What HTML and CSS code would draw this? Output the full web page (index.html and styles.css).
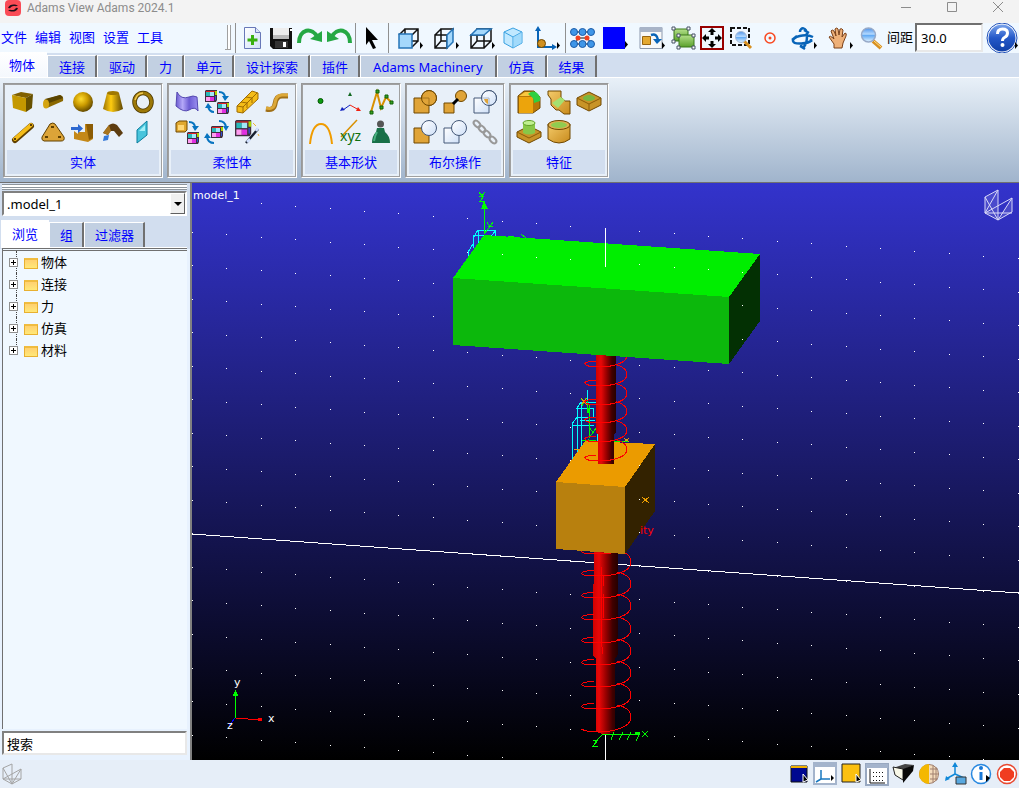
FILE: index.html
```html
<!DOCTYPE html>
<html lang="zh-CN">
<head>
<meta charset="utf-8">
<title>Adams View Adams 2024.1</title>
<link rel="stylesheet" href="styles.css">
</head>
<body>
<header class="titlebar">
  <svg class="logo" viewBox="0 0 16 16" width="16" height="16" aria-hidden="true">
    <defs>
      <linearGradient id="gold" x1="0" y1="0" x2="1" y2="0"><stop offset="0" stop-color="#9a7200"/><stop offset=".4" stop-color="#ffcc10"/><stop offset="1" stop-color="#5e4500"/></linearGradient>
      <radialGradient id="ball" cx=".4" cy=".35" r=".65"><stop offset="0" stop-color="#ffdc30"/><stop offset=".5" stop-color="#cc9c00"/><stop offset="1" stop-color="#664c00"/></radialGradient>
      <linearGradient id="tan" x1="0" y1="0" x2="1" y2="1"><stop offset="0" stop-color="#f4cb6a"/><stop offset="1" stop-color="#c88a1c"/></linearGradient>
      <linearGradient id="paper" x1="0" y1="0" x2="1" y2="1"><stop offset="0" stop-color="#fff"/><stop offset="1" stop-color="#cfe0f8"/></linearGradient>
      <linearGradient id="leaf" x1="0" y1="0" x2="0" y2="1"><stop offset="0" stop-color="#b4e08a"/><stop offset="1" stop-color="#5aa02c"/></linearGradient>
      <linearGradient id="lens" x1="0" y1="0" x2="0" y2="1"><stop offset="0" stop-color="#4a90e8"/><stop offset=".45" stop-color="#b8dcff"/><stop offset=".5" stop-color="#5aa6f4"/><stop offset="1" stop-color="#e4f4ff"/></linearGradient>
      <linearGradient id="help" x1="0" y1="0" x2="0" y2="1"><stop offset="0" stop-color="#7aa4ec"/><stop offset=".5" stop-color="#2458c8"/><stop offset="1" stop-color="#1040a8"/></linearGradient>
      <linearGradient id="violet" x1="0" y1="0" x2="1" y2="0"><stop offset="0" stop-color="#6a5ad0"/><stop offset=".3" stop-color="#b4a8f8"/><stop offset=".6" stop-color="#6c5cd4"/><stop offset="1" stop-color="#9c90f0"/></linearGradient>
    </defs>
    <rect width="16" height="16" rx="4" fill="#fa4b55"/>
    <path d="M3 8c1-3 4-4 7-3.500l3 1-2 .8c-3-1-5 0-6 2zM13 8c-1 3-4 4-7 3.500l-3-1 2-.8c3 1 5 0 6-2z" fill="#1c1018"/>
  </svg>
  <h1 class="title">Adams View Adams 2024.1</h1>
  <div class="window-buttons">
    <button aria-label="最小化"><svg viewBox="0 0 12 12" width="12" height="12"><path d="M1 6.500h10" class="thin"/></svg></button>
    <button aria-label="最大化"><svg viewBox="0 0 12 12" width="12" height="12"><path d="M1.500 1.500h9v9h-9z" class="thin"/></svg></button>
    <button aria-label="关闭"><svg viewBox="0 0 12 12" width="12" height="12"><path d="M1 1l10 10M11 1L1 11" class="thin"/></svg></button>
  </div>
</header>

<div class="toolbar">
  <nav class="menu">
    <a href="#file">文件</a><a href="#edit">编辑</a><a href="#view">视图</a><a href="#settings">设置</a><a href="#tools">工具</a>
  </nav>
  <div class="grip"></div>
  <div class="tool-group">
    <button class="tool" aria-label="新建"><svg viewBox="0 0 29 30"><path d="M6.500 4.500h11l5 5v16h-16z" fill="url(#paper)" stroke="#6878b8"/><path d="M17.500 4.500v5h5" fill="#dde4f8" stroke="#6878b8"/><path d="M13 12h3v3.500h3.500v3H16V22h-3v-3.500H9.500v-3H13z" fill="#38b010"/></svg></button>
    <button class="tool" aria-label="保存"><svg viewBox="0 0 29 30"><path d="M3 5h22v21H6l-3-3z" fill="#111"/><path d="M6 5h16v11H6z" fill="#eee"/><path d="M6 12h16v4H6z" fill="#bbb"/><path d="M8 18h13v7H8z" fill="#333"/><path d="M16 19h3v5h-3z" fill="#fff"/><path d="M23 6h2v2h-2z" fill="#fff"/></svg></button>
    <button class="tool" aria-label="重做"><svg viewBox="0 0 29 30"><path d="M3 20C3 6 16 3 22 15" fill="none" stroke="#25a844" stroke-width="4"/><path d="M14 16l12 3V8z" fill="#25a844"/></svg></button>
    <button class="tool" aria-label="撤销"><svg viewBox="0 0 29 30"><path d="M25 20C25 6 12 3 6 15" fill="none" stroke="#25a844" stroke-width="4"/><path d="M14 16L2 19V8z" fill="#25a844"/></svg></button>
  </div>
  <div class="tool-group">
    <button class="tool" aria-label="选择"><svg viewBox="0 0 29 30"><path d="M8 4l12 13h-6l4 8-3 1-4-8-3 4z" fill="#000"/></svg></button>
  </div>
  <div class="tool-group">
    <button class="tool wide" aria-label="前视图"><svg viewBox="0 0 36 30"><path d="M14 18V6h13v12zM14 6l-6 6M27 6l-6 6M27 18l-6 6" fill="none" stroke="#111" stroke-width="1.500"/><path d="M8 11h13v14H8z" fill="#a4d8fc" stroke="#2474b8" stroke-width="1.500"/><path class="drop" d="M29 19v7l3-3.500z"/></svg></button>
    <button class="tool wide" aria-label="右视图"><svg viewBox="0 0 36 30"><path d="M8 12h12v13H8zM14 18V6h13M14 18h12M14 6l-6 6M14 18l-6 7" fill="none" stroke="#111" stroke-width="1.500"/><path d="M20 12l6-6v13l-6 6z" fill="#a4d8fc" stroke="#2474b8" stroke-width="1.500"/><path class="drop" d="M29 19v7l3-3.500z"/></svg></button>
    <button class="tool wide" aria-label="顶视图"><svg viewBox="0 0 36 30"><path d="M8 12h13v13H8zM14 18V6h14v12zM14 18l-6 7M28 18l-7 7" fill="none" stroke="#111" stroke-width="1.500"/><path d="M14 6h14l-7 6H8z" fill="#a4d8fc" stroke="#2474b8" stroke-width="1.500"/><path class="drop" d="M29 19v7l3-3.500z"/></svg></button>
    <button class="tool" aria-label="等轴测视图"><svg viewBox="0 0 29 30"><path d="M14 5l9 4v11l-9 5-9-5V9z" fill="#c0e8ff" stroke="#38a0e0"/><path d="M5 9l9 5 9-5M14 14v11" fill="none" stroke="#38a0e0"/><path d="M14 14l9-5v11l-9 5z" fill="#8cd0f8" opacity=".6"/></svg></button>
    <button class="tool wide" aria-label="坐标系方向"><svg viewBox="0 0 36 30"><path d="M10 7v17h17" fill="none" stroke="#0864b8" stroke-width="2"/><path d="M7 8l3-5 3 5zM24 21l5 3-5 3z" fill="#0864b8"/><circle cx="13.500" cy="20.500" r="4" fill="#d09020" stroke="#704800"/><path class="drop" d="M29 19v7l3-3.500z"/></svg></button>
  </div>
  <div class="tool-group">
    <button class="tool" aria-label="显示拓扑"><svg viewBox="0 0 29 30"><path d="M6 9h18M6 21h18M6 21l5-6M24 21l-5-6" stroke="#111"/><path d="M8 15h13" stroke="#111"/><circle cx="10" cy="15" r="2.500" fill="#f04020"/><circle cx="19" cy="15" r="2.500" fill="#f04020"/><g fill="#3f96e8" stroke="#1c5ca8"><circle cx="6" cy="9" r="3.500"/><circle cx="14.500" cy="9" r="3.500"/><circle cx="23" cy="9" r="3.500"/><circle cx="6" cy="21" r="3.500"/><circle cx="14.500" cy="21" r="3.500"/><circle cx="23" cy="21" r="3.500"/></g></svg></button>
    <button class="tool wide" aria-label="颜色"><svg viewBox="0 0 36 30"><path d="M6 4h22v22H6z" fill="#00f"/><path class="drop" d="M28 18v7l3-3.500z"/></svg></button>
    <button class="tool wide" aria-label="对象位置"><svg viewBox="0 0 36 30"><path d="M7 4.500h22v21H7z" fill="#f8f8f8" stroke="#8c98ac"/><path d="M7 4h22v5H7z" fill="#a8b4c8"/><path d="M9.500 13.500h8v8h-8z" fill="#e4a830" stroke="#986410"/><path d="M18 12q6-2 7 5" fill="none" stroke="#0864b8" stroke-width="2.500"/><path d="M20 16h9l-5 5z" fill="#0864b8"/><path class="drop" d="M29 19v7l3-3.500z"/></svg></button>
    <button class="tool" aria-label="编组"><svg viewBox="0 0 29 30"><path d="M5 6h14v12H5z" fill="url(#leaf)" stroke="#387818"/><path d="M10 12h15v12H10z" fill="url(#leaf)" stroke="#387818"/><path d="M3 4h3v3H3zM18 4h3v3h-3zM3 17h3v3H3zM8 11h3v3H8zM23 11h3v3h-3zM8 23h3v3H8zM23 23h3v3h-3z" fill="#fff" stroke="#445064"/></svg></button>
    <button class="tool" aria-label="适合窗口"><svg viewBox="0 0 29 30"><path d="M3 4h22v22H3z" fill="#f0f8ff" stroke="#980000" stroke-width="2"/><path d="M14 5l4 4h-2.500v3h-3V9H10zM14 25l4-4h-2.500v-3h-3v3H10zM4 15l4-4v2.500h3v3H8V19zM24 15l-4-4v2.500h-3v3h3V19z"/></svg></button>
    <button class="tool" aria-label="窗口缩放"><svg viewBox="0 0 29 30"><path d="M4 5h18v17H4z" fill="none" stroke="#111" stroke-width="2" stroke-dasharray="4 2"/><path d="M17 18l7 7" stroke="#d89020" stroke-width="3"/><circle cx="14" cy="14" r="5.500" fill="url(#lens)" stroke="#a4b8d4"/></svg></button>
    <button class="tool" aria-label="居中"><svg viewBox="0 0 29 30"><circle cx="14" cy="15" r="5" fill="none" stroke="#f84820" stroke-width="1.500"/><circle cx="14" cy="15" r="1.500" fill="#f84820"/></svg></button>
    <button class="tool wide" aria-label="旋转"><svg viewBox="0 0 36 30"><path d="M28 14C20 10 7 14 8 18s15 3 19-1M15 9c0-5 7-6 7 4 0 10-5 14-6 9M7 17l5-4M15 23l5 3M19 7l5 3M26 16v3" fill="none" stroke="#0864b8" stroke-width="2.500"/><path class="drop" d="M29 19v7l3-3.500z"/></svg></button>
    <button class="tool wide" aria-label="平移"><svg viewBox="0 0 36 30"><path d="M13 25v-4l-5-7q1-2 4 1l1 1-3-8q1-2 3 0l2 5-1-7q2-2 3 0l1 6 1-6q2-1 3 1l-1 7 3-4q2 0 1 3l-3 7-1 5z" fill="#eeb078" stroke="#7a4018"/><path class="drop" d="M29 19v7l3-3.500z"/></svg></button>
    <button class="tool" aria-label="缩放"><svg viewBox="0 0 29 30"><path d="M16 18l8 7" stroke="#d89020" stroke-width="4"/><path d="M17 18l7 6" stroke="#ffe08c"/><circle cx="11.500" cy="12" r="7" fill="url(#lens)" stroke="#98aac8" stroke-width="1.500"/></svg></button>
  </div>
  <label class="spacing" for="spacing">间距</label>
  <input class="spacing-input" id="spacing" value="30.0">
  <button class="help" aria-label="帮助"><svg viewBox="0 0 34 30"><circle cx="17" cy="15" r="15" fill="#fff" stroke="#2050b8"/><circle cx="17" cy="15" r="13.500" fill="url(#help)"/><path d="M12.500 11q0-5 5-5 5 0 5 4 0 3-3 4.500-2 1-2 3.500" fill="none" stroke="#fff" stroke-width="3"/><circle cx="17.500" cy="22" r="2" fill="#fff"/><path class="drop" d="M30 19v7l3-3.500z"/></svg></button>
</div>

<nav class="tabs">
  <button class="tab active">物体</button><button class="tab">连接</button><button class="tab">驱动</button><button class="tab">力</button><button class="tab">单元</button><button class="tab">设计探索</button><button class="tab">插件</button><button class="tab long">Adams Machinery</button><button class="tab">仿真</button><button class="tab">结果</button>
</nav>

<section class="ribbon">
  <div class="panel">
    <div class="icons five">
      <button aria-label="立方体"><svg viewBox="0 0 24 24"><path d="M1 5l9-3 12 2-7 4z" fill="#806000"/><path d="M1 5l14 3v14L2 18z" fill="#c49800"/><path d="M15 8l7-4-1 14-6 4z" fill="#665000"/></svg></button>
      <button aria-label="圆柱体"><svg viewBox="0 0 24 24"><path d="M3 10L19 5q4 1 3 6L6 18z" fill="#8a6800"/><path d="M4 9L19 5q2 1 3 3L8 13z" fill="#5a4400"/><ellipse cx="5" cy="14" rx="3" ry="4.500" fill="#d4a410"/></svg></button>
      <button aria-label="球体"><svg viewBox="0 0 24 24"><circle cx="12" cy="12" r="10" fill="url(#ball)"/></svg></button>
      <button aria-label="锥台"><svg viewBox="0 0 24 24"><path d="M6 3h12l4 16q-10 6-20 0z" fill="url(#gold)"/><ellipse cx="12" cy="3" rx="6" ry="2" fill="#a07800"/></svg></button>
      <button aria-label="圆环"><svg viewBox="0 0 24 24"><ellipse cx="12" cy="12" rx="8.500" ry="9" fill="none" stroke="#4c3800" stroke-width="4.500"/><ellipse cx="12" cy="12" rx="8.500" ry="9" fill="none" stroke="#9c7808" stroke-width="3"/><path d="M4 10q2-7 8-7" fill="none" stroke="#f0c850" stroke-width="1.500"/></svg></button>
      <button aria-label="连杆"><svg viewBox="0 0 24 24"><path d="M4 20L20 6" stroke="#604000" stroke-width="6" stroke-linecap="round"/><path d="M4 19L20 5" stroke="#f4bc18" stroke-width="4" stroke-linecap="round"/><path d="M3 19h2M19 5h2" stroke="#604000" stroke-width="2"/></svg></button>
      <button aria-label="平板"><svg viewBox="0 0 24 24"><path d="M9 4q3-2 5 0l9 13q1 4-3 4H3q-3-1-2-4z" fill="#dca438" stroke="#604000"/><path d="M10 7h3M4 17h3M17 17h3" stroke="#604000" stroke-width="2"/></svg></button>
      <button aria-label="拉伸体"><svg viewBox="0 0 24 24"><path d="M3 11l4 3v-2h7V4h8v15l-5 3-14-3z" fill="#c48818"/><path d="M15 4h7v14l-4 2z" fill="#8c5c04"/><path d="M0 7h7V4l5 4.500L7 13v-3H0z" fill="#2c68d0"/></svg></button>
      <button aria-label="旋转体"><svg viewBox="0 0 24 24"><path d="M2 13l6-8q4-3 8 0l6 8-4 4-5-6H9l-2 4z" fill="#5c3c10"/><path d="M2 13l6-8 2 6-3 4z" fill="#a8741c"/><path d="M3 16l5-1-1 5-5 1z" fill="#3478d8"/></svg></button>
      <button aria-label="平面"><svg viewBox="0 0 24 24"><path d="M6 10L16 1v14L6 23z" fill="#48c4dc" stroke="#087c9c"/><path d="M8 11l6-6v6z" fill="#a4f0f8"/></svg></button>
    </div>
    <h2>实体</h2>
  </div>
  <div class="panel">
    <div class="icons four">
      <button aria-label="柔性体"><svg viewBox="0 0 24 24"><path d="M2 2q4 8 12 5 4-2 8 0l1 14q-3-5-9-1-5 3-13-4z" fill="url(#violet)" stroke="#5448b0"/></svg></button>
      <button aria-label="刚体转柔性"><svg viewBox="0 0 24 24"><g id="mesh"><path d="M0 1l1-1h11v10l-1 2H0z" fill="#403040"/><path d="M1 1h9v1H1z" fill="#e02020"/><path d="M1 2h4v4H1z" fill="#28b8b8"/><path d="M5 2h4v4H5z" fill="#a0e8f8"/><path d="M1 7h4v4H1z" fill="#ff9cf0"/><path d="M5 7h4v4H5z" fill="#e030e0"/><path d="M10 1h2v4h-2z" fill="#a8d800"/><path d="M10 6h1v4h-1z" fill="#3050d0"/></g><use href="#mesh" x="12" y="12"/><path d="M14 2q6 0 6 6M9 22q-5 0-6-6" fill="none" stroke="#0874c0" stroke-width="2"/><path d="M17 6h7l-4 5zM0 18l3-5 4 5z" fill="#0874c0"/></svg></button>
      <button aria-label="梁"><svg viewBox="0 0 24 24"><path d="M2 16L17 1l6 2v6L8 23l-6-1z" fill="#f4bc18" stroke="#a06c00"/><path d="M2 16l6 1v6M8 17L22 3M6 12l6 1v5M11 7l6 1v5" fill="none" stroke="#a06c00"/></svg></button>
      <button aria-label="离散柔性连杆"><svg viewBox="0 0 24 24"><path d="M1 19q8 2 9-5 1-8 7-8h6" fill="none" stroke="#a07018" stroke-width="5"/><path d="M1 18q8 2 9-5 1-8 7-8h6" fill="none" stroke="#dca838" stroke-width="3"/></svg></button>
      <button aria-label="刚柔转换"><svg viewBox="0 0 24 24"><path d="M1 3l3-2h8v9l-2 2H1z" fill="#e0a830" stroke="#704800"/><path d="M3 5h6v5H3z" fill="#ffd878"/><use href="#mesh" x="12" y="12"/><path d="M14 2q6 0 6 6" fill="none" stroke="#0874c0" stroke-width="2"/><path d="M17 6h7l-4 5z" fill="#0874c0"/></svg></button>
      <button aria-label="柔性替换"><svg viewBox="0 0 24 24"><use href="#mesh" x="6" y="6"/><path d="M14 1q6 0 7 6M9 23q-6 0-7-6" fill="none" stroke="#0874c0" stroke-width="2"/><path d="M18 6h6l-3 5zM-1 18l3-5 4 5z" fill="#0874c0"/></svg></button>
      <button aria-label="柔性向导"><svg viewBox="0 0 24 24"><g transform="scale(1.350)"><use href="#mesh"/></g><path d="M11 23L23 9" stroke="#182030" stroke-width="2.500"/><path d="M12 22l3-3M21 11l2-3" stroke="#d0e0ff" stroke-width="2.500"/><path d="M18 3l3 3M23 14l1 2" stroke="#f0b030"/></svg></button>
    </div>
    <h2>柔性体</h2>
  </div>
  <div class="panel">
    <div class="icons three">
      <button aria-label="点"><svg viewBox="0 0 24 24"><circle cx="11.500" cy="11" r="2.500" fill="#0c9c10" stroke="#045804"/></svg></button>
      <button aria-label="标记点"><svg viewBox="0 0 24 24"><path d="M11 15L4 20" stroke="#1020c0"/><path d="M11 15l9 5" stroke="#f02010"/><path d="M1 21l2-4 3 3z" fill="#1020c0"/><path d="M22 21h-5l2-4z" fill="#f02010"/><path d="M11 2l2 4H9z" fill="#106820"/></svg></button>
      <button aria-label="多段线"><svg viewBox="0 0 24 24"><path d="M2 22L8 2l4 16 5-11 5 5" fill="none" stroke="#d89000" stroke-width="2"/><path d="M1 21h3v3H1zM7 0h3v3H7zM11 16h3v3h-3zM16 5h3v3h-3zM21 11h3v3h-3z" fill="#38a020" stroke="#106008"/></svg></button>
      <button aria-label="弧"><svg viewBox="0 0 24 24"><path d="M1 24Q3 4 12 4t11 20" fill="none" stroke="#f09c00" stroke-width="2"/></svg></button>
      <button aria-label="样条"><svg viewBox="0 0 24 24"><path d="M2 17L18 0" stroke="#d89000" stroke-width="1.500"/><text x="1" y="21" class="xyz">xyz</text></svg></button>
      <button aria-label="点质量"><svg viewBox="0 0 24 24"><path d="M8 8h7l1 4q5 4 5 11H3q0-7 4-11z" fill="#187048"/><path d="M8 12q-2 3-3 9" stroke="#48b080" fill="none" stroke-width="2"/><circle cx="11.500" cy="4" r="3.500" fill="#555"/></svg></button>
    </div>
    <h2>基本形状</h2>
  </div>
  <div class="panel">
    <div class="icons three">
      <button aria-label="合并"><svg viewBox="0 0 24 24"><g fill="#e0a438" stroke="#704800"><circle cx="16" cy="8" r="7.500"/><path d="M1 8h15v15H1z"/><circle cx="16" cy="8" r="7.500" fill-opacity=".5"/></g></svg></button>
      <button aria-label="联合"><svg viewBox="0 0 24 24"><g fill="#e0a438" stroke="#704800"><circle cx="18" cy="6" r="5.500"/><path d="M1 13h10v10H1z"/></g><path d="M10 14l5-5" stroke="#000" stroke-width="3"/></svg></button>
      <button aria-label="相交"><svg viewBox="0 0 24 24"><g fill="url(#paper)" stroke="#445878"><circle cx="16" cy="8" r="7.500"/><path d="M1 8h15v15H1z"/><circle cx="16" cy="8" r="7.500" fill-opacity=".6"/></g><path d="M11 9h4v5q-3-1-4-5" fill="#e0a438"/></svg></button>
      <button aria-label="切割"><svg viewBox="0 0 24 24"><path d="M1 8h15v15H1z" fill="#e0a438" stroke="#704800"/><circle cx="16" cy="8" r="7.500" fill="url(#paper)" stroke="#445878"/></svg></button>
      <button aria-label="分离"><svg viewBox="0 0 24 24"><g fill="url(#paper)" stroke="#445878"><path d="M1 8h15v15H1z"/><circle cx="16" cy="8" r="7.500"/></g></svg></button>
      <button aria-label="链"><svg viewBox="0 0 24 24"><g fill="none" stroke="#999" stroke-width="2"><ellipse cx="4" cy="4" rx="4" ry="2.500" transform="rotate(45 4 4)"/><ellipse cx="9" cy="9" rx="4" ry="2.500" transform="rotate(45 9 9)"/><ellipse cx="14" cy="14" rx="4" ry="2.500" transform="rotate(45 14 14)"/><ellipse cx="20" cy="20" rx="4" ry="2.500" transform="rotate(45 20 20)"/></g></svg></button>
    </div>
    <h2>布尔操作</h2>
  </div>
  <div class="panel">
    <div class="icons three">
      <button aria-label="圆角"><svg viewBox="0 0 24 24"><path d="M1 6l6-5h10l6 6v11l-7 5H1z" fill="#b87808" stroke="#704800"/><path d="M2 7h14v16H2z" fill="#eca40c"/><path d="M2 6l6-4h8l-4 4z" fill="#f8c840"/><path d="M11 4q7-6 12 3v4l-6 2q0-6-6-9" fill="#30d040"/></svg></button>
      <button aria-label="倒角"><svg viewBox="0 0 24 24"><path d="M1 1h13v6l4 4h5v13h-6l-5-4H9l-5-5V9L1 5z" fill="url(#tan)" stroke="#704800"/><path d="M14 7l4 3-7 8-6-5z" fill="#a4e070"/></svg></button>
      <button aria-label="孔"><svg viewBox="0 0 24 24"><path d="M0 8l12-6 12 6v7l-12 6-12-6z" fill="#c89428" stroke="#704800"/><path d="M0 8l12 6 12-6M12 14v7" fill="none" stroke="#8c5c08"/><ellipse cx="12" cy="8" rx="6" ry="3" fill="#78b840"/></svg></button>
      <button aria-label="凸台"><svg viewBox="0 0 24 24"><path d="M0 12l12-6 12 6v5l-12 6-12-6z" fill="#c89428" stroke="#704800"/><path d="M0 12l12 6 12-6" fill="none" stroke="#8c5c08"/><path d="M6 3v10q6 3 12 0V3z" fill="#88c848"/><ellipse cx="12" cy="3" rx="6" ry="2.500" fill="#c0f090" stroke="#60a028"/></svg></button>
      <button aria-label="抽壳"><svg viewBox="0 0 24 24"><path d="M1 4v15q11 8 22 0V4z" fill="url(#tan)" stroke="#704800"/><ellipse cx="12" cy="5" rx="11" ry="4.500" fill="#e0b050" stroke="#704800"/><ellipse cx="12" cy="5" rx="8" ry="3" fill="#90cc50"/></svg></button>
    </div>
    <h2>特征</h2>
  </div>
</section>

<main class="work">
  <aside class="browser">
    <div class="dock-handle"></div>
    <div class="combo">
      <select aria-label="模型"><option>.model_1</option></select>
      <span class="combo-arrow"></span>
    </div>
    <div class="side-tabs">
      <button class="tab active">浏览</button><button class="tab">组</button><button class="tab">过滤器</button>
    </div>
    <ul class="tree">
      <li><button aria-label="展开物体"></button><span class="folder"></span>物体</li>
      <li><button aria-label="展开连接"></button><span class="folder"></span>连接</li>
      <li><button aria-label="展开力"></button><span class="folder"></span>力</li>
      <li><button aria-label="展开仿真"></button><span class="folder"></span>仿真</li>
      <li><button aria-label="展开材料"></button><span class="folder"></span>材料</li>
    </ul>
    <input class="search" aria-label="搜索" value="搜索">
  </aside>
  <section class="viewport">
    <svg class="scene" viewBox="192 183 827 577" preserveAspectRatio="xMidYMid slice" role="img" aria-label="model_1">
      <defs>
        <linearGradient id="rod" x1="0" y1="0" x2="1" y2="0"><stop offset="0" stop-color="#d00000"/><stop offset=".25" stop-color="#e80808"/><stop offset=".55" stop-color="#900000"/><stop offset=".8" stop-color="#400000"/><stop offset="1" stop-color="#280000"/></linearGradient>
        <path id="turn" d="M616 364.500Q627 368 627 374C627 383 611 386 598 386Q586 386 585 382.500Q586 380.500 596 380.500"/>
        <path id="turn-low" d="M617 550Q631 553 631 562C631 573 612 576 597 576Q582 576 581.500 573.500Q583 570.500 594 570.500"/>
      </defs>
      <path d="M192 534L1019 593" stroke="#fff"/>
      <path d="M605.500 733v27" stroke="#fff"/>

      <g fill="none" stroke="#0ff">
        <path d="M484 228v-12M473 248v-10l5-8h17v7M478 248v-18M473 235h18v3M468 258v-6l5-8M495 231l-5 7"/>
        <path d="M577 452v-44l4-6h16M581 402v48M576 408h17v10M572 460v-36l5-7h20M577 418v36M572 425h22M587 390v13M597 430v14M580 420h15"/>
      </g>
      <g stroke="#0f0" fill="none">
        <path d="M484 234v-28M484 234l8-10M508 236h6M521 234l5 4M589 404v34l6-8M587 401v12M582 440h14M614 441h14"/>
        <path d="M482 208l2-6 3 6zM587 408h2v4h-2z" fill="#0f0"/>
        <path d="M487 222l3 5 3-5M488 226h5M590 428l3 5 3-5"/>
        <path d="M479 192l3 4 3-4M479 196h5l-4 5h5M581 399l6 5M586 398l-4 8"/>
      </g>
      <path d="M581 398l6 7M587 398l-6 7M574 449h7M624 438l5 4M629 438l-5 4" stroke="#e9980a"/>

      <path d="M594 550h23.500v105l-2.500 4v73q-9 4-19 0v-73l-3-4v-71h1z" fill="url(#rod)"/>
      <path d="M601 567v72l2 15M603 576v10M603 594v24" stroke="#f00" fill="none"/>
      <g fill="none" stroke="#f00">
        <use href="#turn-low" y="-22"/><use href="#turn-low"/><use href="#turn-low" y="22"/><use href="#turn-low" y="44"/><use href="#turn-low" y="67"/><use href="#turn-low" y="89"/><use href="#turn-low" y="111"/><use href="#turn-low" y="133"/>
        <path d="M617 705Q631 708 631 717C631 728 612 732 597 732Q586 732 581.500 729"/>
      </g>

      <path d="M556 482l29-41 70 3-30 43z" fill="#eb9b00"/>
      <path d="M556 482l69 5v67l-69-5z" fill="#b8800e"/>
      <path d="M625 487l30-43v67l-30 43z" fill="#332200"/>
      <path d="M642 497l7 6M649 497l-7 6" stroke="#f0a000"/>
      <text x="640" y="534" class="mark red">ity</text>

      <path d="M596 350h20v82l-2 3v29h-16v-29l-2-3z" fill="url(#rod)"/>
      <g fill="none" stroke="#f00">
        <use href="#turn" y="-19"/><use href="#turn"/><use href="#turn" y="19"/><use href="#turn" y="37"/><use href="#turn" y="56"/><use href="#turn" y="75"/>
      </g>

      <path d="M453 278l31-43 276 19-31 43z" fill="#00ee00"/>
      <path d="M453 278l276 19v67l-276-19z" fill="#0cb80c"/>
      <path d="M729 297l31-43v67l-31 43z" fill="#033003"/>
      <path d="M605.500 228v39" stroke="#fff"/>
      <g id="front-grid" fill="#fff"></g>

      <g stroke="#0f0" fill="none">
        <path d="M603 734h36M603 734l-8 8M614 732l-3 8M623 732l-4 8M631 732l-4 8M640 733l-4 8M642 731l6 6M648 731l-6 6M593 740h5l-5 6h5"/>
        <path d="M635 732h4v2h-4z" fill="#0f0"/>
      </g>

      <g class="triad">
        <path d="M235.500 718v-23" stroke="#0f0"/><path d="M235.500 691l2 4h-4z" stroke="#0f0" fill="#0f0"/>
        <path d="M236 718.500l24 1" stroke="#f00"/><circle cx="260" cy="719.500" r="1.500" fill="#f00" stroke="#f00"/>
        <path d="M235 718l-6 8" stroke="#00f"/>
        <text x="234" y="686" class="mark">y</text><text x="268" y="722" class="mark">x</text><text x="227" y="729" class="mark">z</text>
      </g>
      <g class="badge">
        <path d="M985 197l13-7v30zM985 197v16l13 7M998 220l14-22v14zM985 213l27-15M985 213h27M985 213l13-23" />
      </g>
      <text x="193" y="199" class="model-name">model_1</text>
    </svg>
  </section>
</main>

<footer class="status">
  <svg class="status-mark" viewBox="0 0 22 24" width="22" height="24" aria-hidden="true"><path d="M2 6l9-4v20zM2 6v11l9 5 9-15v10l-9 5M2 17l18-10M2 17h18" fill="none" stroke="#a4a4a4"/></svg>
  <div class="status-tools">
    <button aria-label="背景"><svg viewBox="0 0 26 28"><path d="M5 6h16v16H5z" fill="#000890" stroke="#111"/><path d="M5 6h16v2H5z" fill="#f0b000"/><path class="cursor" d="M17 14v8l5-2z"/></svg></button>
    <button aria-label="坐标轴"><svg viewBox="0 0 26 28"><path d="M2 3h22v21H2z" fill="#fff" stroke="#a4b4cc" stroke-width="2"/><path d="M2 3h22v4H2z" fill="#a4b4cc"/><path d="M9 10v9h9M9 19l-5 3" fill="none" stroke="#1878c0" stroke-width="1.500"/><path d="M19 15v6l3-3z"/></svg></button>
    <button aria-label="着色"><svg viewBox="0 0 26 28"><path d="M4 4h18v18H4z" fill="#fcc010" stroke="#222"/><path class="cursor" d="M18 14v8l5-2z"/></svg></button>
    <button aria-label="网格"><svg viewBox="0 0 26 28"><path d="M2 4h22v21H2z" fill="#fff" stroke="#98a8c0" stroke-width="2"/><path d="M2 4h22v4H2z" fill="#a4b4cc"/><path d="M6 9v14h15" fill="none" stroke="#111"/><path d="M9 12.500h12M9 16.500h12M9 20.500h12" stroke="#111" stroke-dasharray="1 2"/></svg></button>
    <button aria-label="透视"><svg viewBox="0 0 26 28"><path d="M3 8l12-4 9 1-11 5z" fill="#444"/><path d="M3 7l10 2v11l-8-5z" fill="#f8f8e8" stroke="#222"/><path d="M13 9l11-4-1 6-10 12z" fill="#080808"/></svg></button>
    <button aria-label="渲染"><svg viewBox="0 0 26 28"><circle cx="13" cy="14" r="9.500" fill="#f4dcbc" stroke="#a08070"/><path d="M13 4a10 10 0 0 0 0 20z" fill="#f4b800"/><path d="M14 9h8M14 14h9M14 19h8M17 5v18M20 7v14" stroke="#a08070" fill="none"/></svg></button>
    <button aria-label="图标可见性"><svg viewBox="0 0 26 28"><path d="M13 4v10l9 4M13 14l-9 5" fill="none" stroke="#1088d8" stroke-width="1.500"/><path d="M10 7l3-5 3 5zM3 21l1-5 4 3z" fill="#1088d8"/><path d="M14 17h10v7H14z" fill="#58a8e0" stroke="#333"/></svg></button>
    <button aria-label="信息"><svg viewBox="0 0 26 28"><circle cx="13" cy="14" r="9.500" fill="#fff" stroke="#2888e0" stroke-width="1.500"/><path d="M13 12v8" stroke="#1878d8" stroke-width="3"/><circle cx="13" cy="8" r="2" fill="#1878d8"/><path d="M18 15v7l4-4z"/></svg></button>
    <button aria-label="停止"><svg viewBox="0 0 26 28"><circle cx="13" cy="14" r="9.500" fill="#fff" stroke="#e84830" stroke-width="1.500"/><path d="M10 8h6l4 4v5l-4 4h-6l-4-4v-5z" fill="#f03c20"/></svg></button>
  </div>
</footer>
<script src="grid.js"></script>
</body>
</html>
```

FILE: styles.css
```css
* { box-sizing: border-box; }

body {
  margin: 0;
  min-height: 100vh;
  display: flex;
  flex-direction: column;
  overflow: hidden;
  background: #e6eef8;
  color: #000;
  font: 13px/20px "Noto Sans", "Noto Sans CJK SC", sans-serif;
}

button, input, select { font: inherit; color: inherit; }

button {
  margin: 0;
  padding: 0;
  border: 0;
  background: none;
}

svg { display: block; }

/* Title bar */
.titlebar {
  display: flex;
  height: 23px;
  padding-left: 5px;
  background: #f3f3f3;
  color: #8c8c8c;
}
.title {
  flex: 1;
  margin: 0;
  padding-left: 6px;
  font: 400 12px/16px Roboto, sans-serif;
}
.window-buttons { display: flex; margin-right: -2px; }
.window-buttons button {
  width: 46px;
  height: 14px;
  display: grid;
  place-items: center;
}
.thin { fill: none; stroke: #8c8c8c; }

/* Menu and main toolbar */
.toolbar {
  display: flex;
  height: 30px;
  background: #f0f8ff;
  overflow: hidden;
}
.menu {
  display: flex;
  gap: 8px;
  width: 225px;
  flex: none;
  padding: 4px 0 0 1px;
}
.menu a { color: #00f; text-decoration: none; }
.grip {
  flex: none;
  width: 6px;
  height: 25px;
  margin: 2px 4px 0 0;
  border-style: solid;
  border-color: #a0a0a0;
  border-width: 0 1px 1px 0;
  box-shadow: inset -2px 0 #fff, inset -3px 0 #a0a0a0;
}
.tool-group {
  display: flex;
  flex: none;
  padding: 0 1px 0 2px;
  border-left: 1px solid #909090;
}
.tool { width: 29px; height: 30px; }
.tool.wide { width: 36px; }
.drop { fill: #000; }
.spacing { flex: none; padding: 4px 2px 0 0; }
.spacing-input {
  flex: 1 1 60px;
  min-width: 0;
  height: 29px;
  padding: 2px 4px;
  border: 2px solid;
  border-color: #707070 #e8e8e8 #e8e8e8 #707070;
  background: #fff;
}
.help { flex: none; width: 34px; margin-left: 2px; }

/* Tab strips */
.tabs {
  display: flex;
  align-items: flex-end;
  height: 25px;
  border-bottom: 1px solid #fff;
  background: #d2deef;
}
.tab {
  height: 22px;
  padding: 0 10px;
  border: 1px solid;
  border-width: 1px 2px 0 1px;
  border-color: #fff #707070 #fff #fff;
  background: #c2d0e2;
  color: #00f;
  white-space: nowrap;
}
.tabs .tab { line-height: 20px; padding: 0 10px 0 11px; }
.tabs .long { padding: 0 12px; }
.tabs .active {
  height: 25px;
  padding: 0 12px 0 9px;
  border: 0;
  background: linear-gradient(#fff, #f4f8fd);
}

/* Ribbon */
.ribbon {
  display: flex;
  align-items: flex-start;
  gap: 4px;
  height: 104px;
  padding: 5px 3px;
  background: linear-gradient(#e8f0f8, #a0b4cc);
}
.panel {
  padding: 2px 3px;
  border: 2px solid;
  border-color: #989898 #fff #fff #989898;
  outline: 1px solid #a0a0a0;
  outline-offset: -2px;
  background: #e8f0f9;
}
.icons { display: grid; grid-auto-rows: 30px; }
.five { grid-template-columns: repeat(5, 30px); }
.four { grid-template-columns: repeat(4, 30px); }
.three { grid-template-columns: repeat(3, 30px); }
.icons button { padding: 3px; }
.icons svg { width: 24px; height: 24px; overflow: visible; }
.xyz { font: 14px "Noto Sans", sans-serif; fill: #107010; }
.panel h2 {
  margin: 3px -1px 0;
  background: #d2deef;
  color: #00f;
  font-size: 13px;
  font-weight: 400;
  line-height: 24px;
  text-align: center;
}

/* Work area */
.work {
  flex: 1;
  display: flex;
  min-height: 0;
  border-top: 1px solid #707070;
}
.browser {
  flex: none;
  width: 192px;
  display: flex;
  flex-direction: column;
  padding: 1px 3px 5px 2px;
  border-right: 2px solid #808080;
  background: linear-gradient(#d2deef, #d2deef 66px, #e8f2fe 66px);
}
.dock-handle {
  height: 6px;
  margin-bottom: 1px;
  border: solid #8c949c;
  border-width: 1px 0;
  background: #fff;
  box-shadow: inset 0 2px #fff, inset 0 3px #8c949c;
}
.combo { display: grid; height: 25px; }
.combo select, .combo-arrow { grid-area: 1 / 1; }
.combo select {
  appearance: none;
  padding: 0 3px;
  border: 2px solid;
  border-color: #808080 #fff #fff #808080;
  border-radius: 0;
  background: #fff;
}
.combo-arrow {
  justify-self: end;
  width: 15px;
  margin: 2px;
  display: grid;
  place-items: center;
  border: 1px solid;
  border-color: #fff #606060 #606060 #fff;
  background: #f0f0f0;
  pointer-events: none;
}
.combo-arrow::before {
  content: "";
  border: 4px solid transparent;
  border-top-color: #000;
  border-bottom: 0;
}
.side-tabs {
  display: flex;
  align-items: flex-end;
  height: 32px;
  margin-left: -1px;
  border-bottom: 1px solid #fff;
}
.side-tabs .tab { height: 25px; padding: 0 9px 0 10px; }
.side-tabs .active { height: 27px; padding: 0 11px; border: 0; background: #fff; }
.tree {
  flex: 1;
  margin: 0 0 2px;
  padding: 0 0 0 9px;
  list-style: none;
  border-top: 3px double #707070;
  border-left: 1px solid #707070;
  background: #f0f8ff;
}
.tree li {
  display: flex;
  align-items: center;
  height: 22px;
}
.tree li::before {
  content: "";
  width: 0;
  height: 22px;
  margin: 0 -5px 0 4px;
  border-left: 1px dotted #444;
}
.tree li:last-child::before { height: 12px; align-self: flex-start; }
.tree button {
  flex: none;
  width: 9px;
  height: 9px;
  margin-left: -3px;
  border: 1px solid #909090;
  background:
    linear-gradient(#000, #000) center / 5px 1px no-repeat,
    linear-gradient(#000, #000) center / 1px 5px no-repeat,
    #fff;
}
.tree button + .folder {
  box-shadow: -4px 0 #f0f8ff, -5px 0 #f0f8ff;
}
.folder {
  width: 14px;
  height: 11px;
  margin: 2px 3px 0 6px;
  border: 1px solid #e8b030;
  border-top: 2px solid #f0bc40;
  background: linear-gradient(#ffd070, #ffe878);
}
.search {
  width: 100%;
  height: 24px;
  padding: 2px 3px;
  border: 2px solid;
  border-color: #808080 #e8e8e8 #e8e8e8 #808080;
  background: #fff;
}

/* 3D view */
.viewport {
  flex: 1;
  min-width: 0;
  display: flex;
  background: linear-gradient(#3333cc, #000);
}
.scene { width: 100%; height: 100%; shape-rendering: crispEdges; }
.mark { font: 11px "DejaVu Sans", sans-serif; fill: #fff; }
.mark.red { fill: #f00; }
.model-name { font: 11px "DejaVu Sans", sans-serif; fill: #fff; }
.badge { fill: #ffffff20; stroke: #d8d8f8; shape-rendering: auto; }

/* Status bar */
.status {
  display: flex;
  height: 28px;
  padding-left: 1px;
  background: #e6eef8;
}
.status-mark { margin-top: 2px; }
.status-tools { display: flex; margin: 0 -1px 0 auto; }
.status-tools button { width: 26px; }
.cursor { fill: #000; stroke: #fff; }
```

FILE: grid.js
```js
// Working-grid points, projected onto the view plane.
const NS = "http://www.w3.org/2000/svg";
const COLUMN = { x: 34.4, y: 2.5 };
const ROW = 33.54;

// Outline of the solid faces that lie in front of the grid.
const solids = [
  [[453, 278], [729, 297], [729, 364], [453, 345]],
  [[556, 482], [585, 441], [625, 443], [625, 554], [556, 549]],
  [[593, 350], [618, 350], [618, 733], [593, 733]],
];

function inside([x, y], shape) {
  let hit = false;
  shape.forEach(([ax, ay], i) => {
    const [bx, by] = shape[(i + 1) % shape.length];
    if (ay > y !== by > y && x < ((bx - ax) * (y - ay)) / (by - ay) + ax) hit = !hit;
  });
  return hit;
}

const layer = document.getElementById("front-grid");
for (let c = 0; c <= 24; c++) {
  for (let r = 0; r <= 16; r++) {
    const x = Math.round(192 + c * COLUMN.x);
    const y = Math.round(198 + c * COLUMN.y + r * ROW);
    if ((c < 2 && r === 0) || y > 759 || solids.some((s) => inside([x, y], s))) continue;
    const dot = document.createElementNS(NS, "rect");
    dot.setAttribute("x", x);
    dot.setAttribute("y", y);
    dot.setAttribute("width", 1);
    dot.setAttribute("height", 1);
    layer.append(dot);
  }
}
```
